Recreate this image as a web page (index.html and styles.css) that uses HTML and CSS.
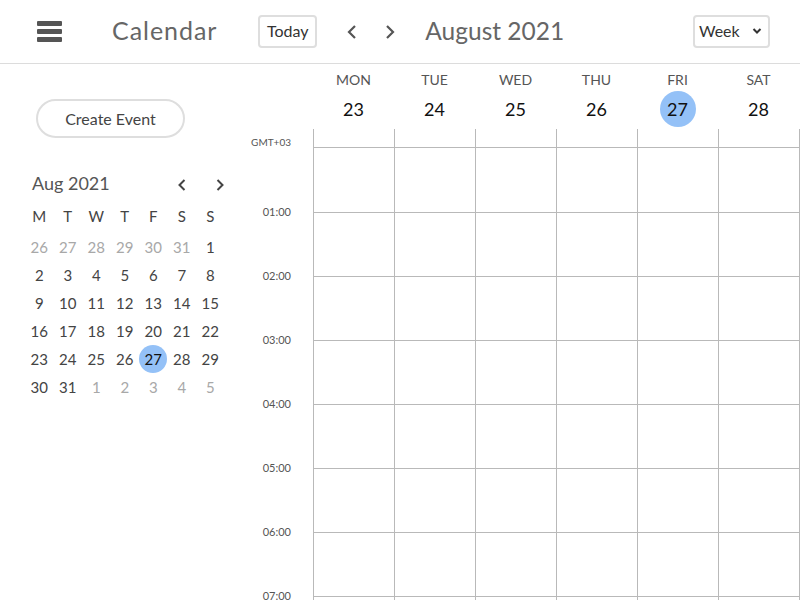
FILE: index.html
```html
<!DOCTYPE html>
<html>
<head>
<meta charset="utf-8">
<link rel="stylesheet" href="styles.css">
</head>
<body>
<header class="topbar">
  <div class="hamburger"><span></span><span></span><span></span></div>
  <div class="app-title">Calendar</div>
  <button class="today-btn">Today</button>
  <div class="nav-arrows">
    <svg class="chev" width="12" height="16" viewBox="0 0 12 16"><polyline points="9,2 3,8 9,14" fill="none" stroke="#555" stroke-width="2.2"/></svg>
    <svg class="chev" width="12" height="16" viewBox="0 0 12 16"><polyline points="3,2 9,8 3,14" fill="none" stroke="#555" stroke-width="2.2"/></svg>
  </div>
  <div class="period">August 2021</div>
  <div class="view-select">Week
    <svg width="10" height="8" viewBox="0 0 10 8"><polyline points="1.5,2 5,5.5 8.5,2" fill="none" stroke="#333" stroke-width="2"/></svg>
  </div>
</header>
<div class="main">
  <aside class="sidebar">
    <button class="create-btn">Create Event</button>
    <div class="mini-head">
      <span class="mini-title">Aug 2021</span>
      <div class="mini-arrows">
        <svg width="12" height="16" viewBox="0 0 12 16"><polyline points="8.5,3 3.5,8 8.5,13" fill="none" stroke="#444" stroke-width="2"/></svg>
        <svg width="12" height="16" viewBox="0 0 12 16"><polyline points="3.5,3 8.5,8 3.5,13" fill="none" stroke="#444" stroke-width="2"/></svg>
      </div>
    </div>
    <div class="mini-grid">
      <span class="wd">M</span><span class="wd">T</span><span class="wd">W</span><span class="wd">T</span><span class="wd">F</span><span class="wd">S</span><span class="wd">S</span>
      <span class="d muted">26</span><span class="d muted">27</span><span class="d muted">28</span><span class="d muted">29</span><span class="d muted">30</span><span class="d muted">31</span><span class="d">1</span>
      <span class="d">2</span><span class="d">3</span><span class="d">4</span><span class="d">5</span><span class="d">6</span><span class="d">7</span><span class="d">8</span>
      <span class="d">9</span><span class="d">10</span><span class="d">11</span><span class="d">12</span><span class="d">13</span><span class="d">14</span><span class="d">15</span>
      <span class="d">16</span><span class="d">17</span><span class="d">18</span><span class="d">19</span><span class="d">20</span><span class="d">21</span><span class="d">22</span>
      <span class="d">23</span><span class="d">24</span><span class="d">25</span><span class="d">26</span><span class="d"><i class="today">27</i></span><span class="d">28</span><span class="d">29</span>
      <span class="d">30</span><span class="d">31</span><span class="d muted">1</span><span class="d muted">2</span><span class="d muted">3</span><span class="d muted">4</span><span class="d muted">5</span>
    </div>
  </aside>
  <section class="week">
    <div class="week-head">
      <div class="gutter-head"></div>
      <div class="day-head"><span class="dname">MON</span><span class="dnum">23</span></div>
      <div class="day-head"><span class="dname">TUE</span><span class="dnum">24</span></div>
      <div class="day-head"><span class="dname">WED</span><span class="dnum">25</span></div>
      <div class="day-head"><span class="dname">THU</span><span class="dnum">26</span></div>
      <div class="day-head"><span class="dname">FRI</span><span class="dnum current">27</span></div>
      <div class="day-head"><span class="dname">SAT</span><span class="dnum">28</span></div>
      <div class="day-head"></div>
    </div>
    <div class="week-body">
      <div class="gutter">
        <div class="tz">GMT+03</div>
        <div class="hour first"></div>
        <div class="hour"><span>01:00</span></div>
        <div class="hour"><span>02:00</span></div>
        <div class="hour"><span>03:00</span></div>
        <div class="hour"><span>04:00</span></div>
        <div class="hour"><span>05:00</span></div>
        <div class="hour"><span>06:00</span></div>
        <div class="hour"><span>07:00</span></div>
      </div>
      <div class="col"><div class="allday"></div><div class="cell first"></div><div class="cell"></div><div class="cell"></div><div class="cell"></div><div class="cell"></div><div class="cell"></div><div class="cell"></div><div class="cell"></div></div>
      <div class="col"><div class="allday"></div><div class="cell first"></div><div class="cell"></div><div class="cell"></div><div class="cell"></div><div class="cell"></div><div class="cell"></div><div class="cell"></div><div class="cell"></div></div>
      <div class="col"><div class="allday"></div><div class="cell first"></div><div class="cell"></div><div class="cell"></div><div class="cell"></div><div class="cell"></div><div class="cell"></div><div class="cell"></div><div class="cell"></div></div>
      <div class="col"><div class="allday"></div><div class="cell first"></div><div class="cell"></div><div class="cell"></div><div class="cell"></div><div class="cell"></div><div class="cell"></div><div class="cell"></div><div class="cell"></div></div>
      <div class="col"><div class="allday"></div><div class="cell first"></div><div class="cell"></div><div class="cell"></div><div class="cell"></div><div class="cell"></div><div class="cell"></div><div class="cell"></div><div class="cell"></div></div>
      <div class="col"><div class="allday"></div><div class="cell first"></div><div class="cell"></div><div class="cell"></div><div class="cell"></div><div class="cell"></div><div class="cell"></div><div class="cell"></div><div class="cell"></div></div>
      <div class="col"><div class="allday"></div><div class="cell first"></div><div class="cell"></div><div class="cell"></div><div class="cell"></div><div class="cell"></div><div class="cell"></div><div class="cell"></div><div class="cell"></div></div>
    </div>
  </section>
</div>
</body>
</html>
```
FILE: styles.css
```css
* { box-sizing: border-box; }
html, body { margin: 0; padding: 0; background: #fff; overflow: hidden; }
body {
  width: 800px; height: 600px;
  font-family: "Lato", "Open Sans", sans-serif;
  color: #333;
}
.topbar {
  height: 64px;
  border-bottom: 1px solid #dcdcdc;
  display: flex;
  align-items: center;
  padding-left: 37px;
}
.hamburger { width: 25px; display: flex; flex-direction: column; gap: 3.5px; }
.hamburger span { display: block; height: 4.5px; background: #555; border-radius: 1px; }
.app-title { margin-left: 50px; margin-bottom: 3px; font-size: 25px; color: #666; letter-spacing: 0.95px; }
.today-btn {
  margin-left: 41px;
  width: 59px; height: 33px;
  border: 2px solid #dedede; border-radius: 4px;
  background: #fff;
  font-family: inherit; font-size: 16px; color: #333;
  padding: 0 0 2px;
}
.nav-arrows { margin-left: 29px; display: flex; gap: 26px; }
.chev { display: block; }
.period { margin-left: 29px; margin-bottom: 3px; font-size: 24.5px; color: #666; }
.view-select {
  margin-left: auto; margin-right: 30px;
  width: 77px; height: 33px;
  border: 2px solid #dedede; border-radius: 4px;
  display: flex; align-items: center; justify-content: space-between;
  padding: 0 6px 2px 4px;
  font-size: 16px; color: #333;
}
.main { display: flex; height: 536px; }
.sidebar { width: 240px; flex: none; padding-left: 25px; }
.create-btn {
  display: block;
  margin: 35px 0 0 11px;
  width: 149px; height: 39px;
  border: 2px solid #dedede; border-radius: 20px;
  background: #fff;
  font-family: inherit; font-size: 16px; color: #444;
  padding: 0;
}
.mini-head {
  margin-top: 33px;
  display: flex; align-items: center; justify-content: space-between;
  width: 201px; height: 24px;
  padding-left: 7px;
}
.mini-title { font-size: 18px; color: #555; }
.mini-arrows { display: flex; gap: 26px; margin-top: 4px; }
.mini-arrows svg { display: block; }
.mini-grid {
  margin-top: 9px;
  display: grid;
  grid-template-columns: repeat(7, 28.5px);
  grid-template-rows: 29px;
  grid-auto-rows: 28px;
}
.mini-grid .wd { display: flex; align-items: center; justify-content: center; font-size: 15px; color: #444; height: 24px; }
.mini-grid .d { display: flex; align-items: center; justify-content: center; font-size: 15px; color: #444; }
.mini-grid .d.muted { color: #a8a8a8; }
.today {
  font-style: normal;
  width: 28px; height: 28px; border-radius: 50%;
  background: #94c1f7; color: #111;
  display: flex; align-items: center; justify-content: center;
}
.week { flex: 1; overflow: hidden; }
.week-head { display: flex; height: 65px; }
.gutter-head { width: 73px; flex: none; }
.day-head {
  width: 81px; flex: none;
  display: flex; flex-direction: column; align-items: center;
  padding-top: 7px;
}
.dname { font-size: 14px; color: #555; height: 18px; line-height: 18px; }
.dnum {
  margin-top: 2px;
  width: 36px; height: 36px; border-radius: 50%;
  display: flex; align-items: center; justify-content: center;
  font-size: 18px; color: #111;
}
.dnum.current { background: #94c1f7; }
.week-body { display: flex; }
.gutter { width: 73px; flex: none; }
.tz { height: 19px; font-size: 10px; color: #555; text-align: right; padding-right: 22px; padding-top: 7px; }
.hour { height: 64px; position: relative; }
.hour.first { height: 65px; }
.hour span {
  position: absolute; right: 22px; top: -8px;
  font-size: 11px; color: #555;
}
.col { width: 81px; flex: none; border-left: 1px solid #b9b9b9; }
.allday { height: 19px; border-bottom: 1px solid #b9b9b9; }
.cell { height: 64px; border-bottom: 1px solid #b9b9b9; }
.cell.first { height: 65px; }
```
